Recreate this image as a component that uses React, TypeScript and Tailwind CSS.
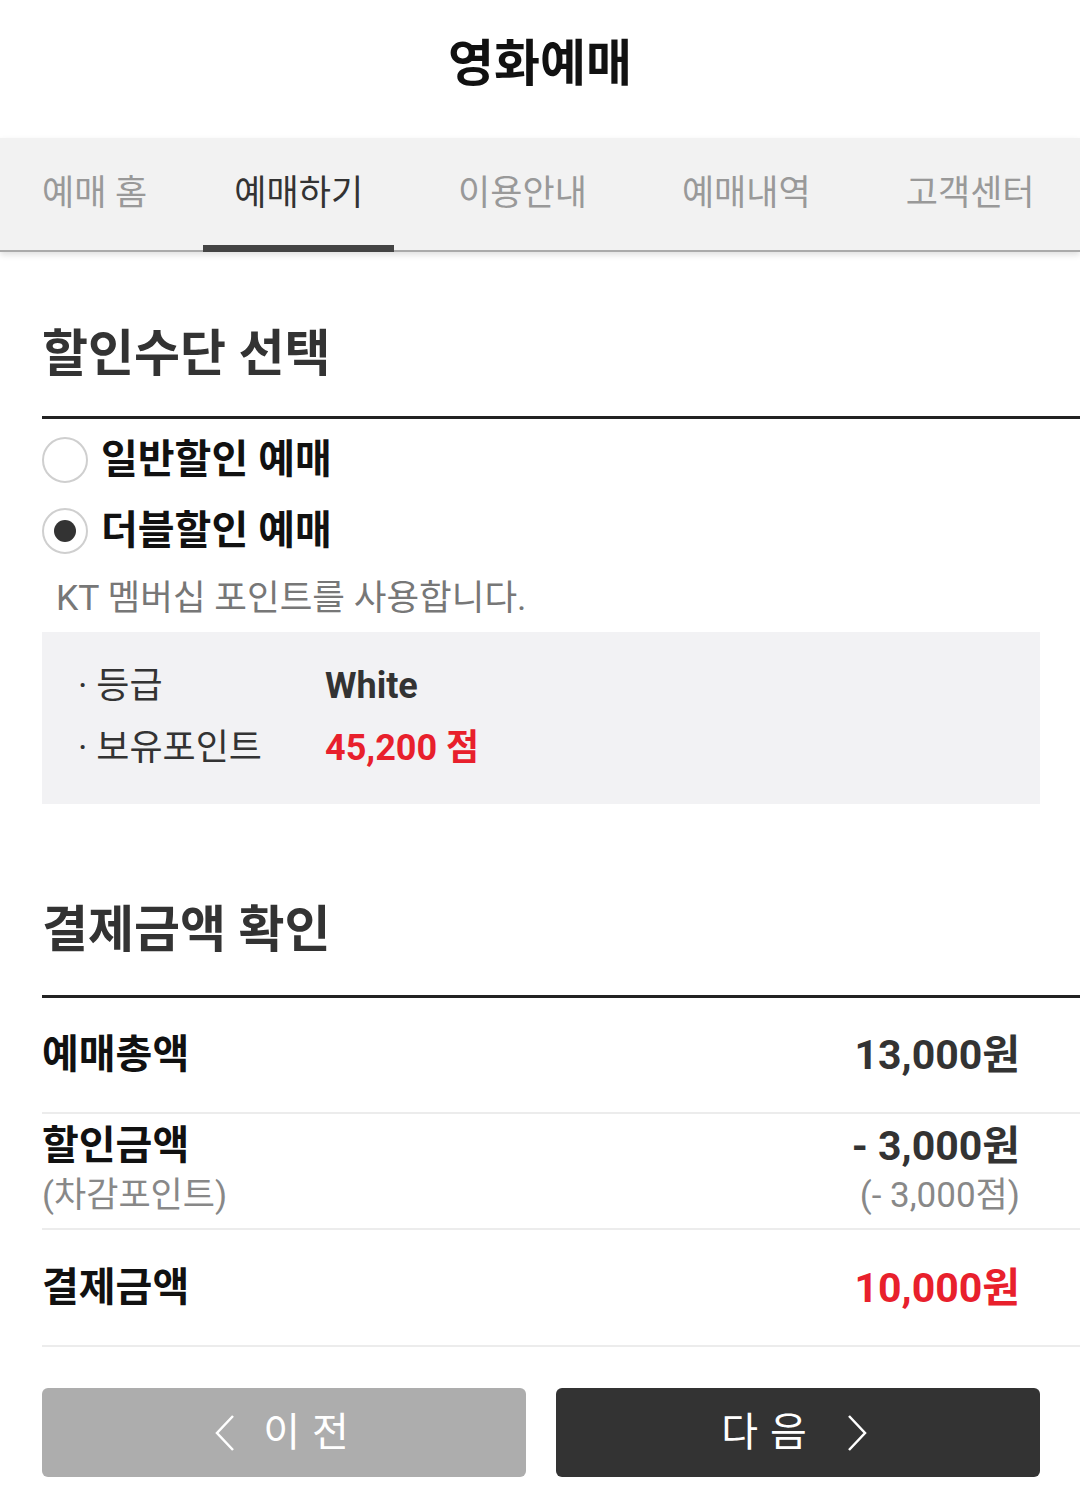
import { ReactNode } from 'react'

const FONT = { fontFamily: 'Roboto, "Noto Sans CJK KR", sans-serif' }

const TABS = [
  { label: '예매 홈', ml: 'ml-[11px]' },
  { label: '예매하기', ml: 'ml-[25px]', active: true },
  { label: '이용안내', ml: 'ml-[33px]' },
  { label: '예매내역', ml: 'ml-[33px]' },
  { label: '고객센터', ml: 'ml-[33px]' },
]

function Radio({ checked, children }: { checked?: boolean; children: ReactNode }) {
  return (
    <div className="flex h-[71px] items-center">
      <span className="flex h-[46px] w-[46px] items-center justify-center rounded-full border-2 border-[#cfcfcf] bg-white">
        {checked && <span className="h-[22px] w-[22px] rounded-full bg-[#333]" />}
      </span>
      <span className="ml-[13px] text-[40px] font-bold leading-none text-[#111]">{children}</span>
    </div>
  )
}

function SumRow({ label, sub, value, subValue, red, h }: {
  label: string
  sub?: string
  value: string
  subValue?: string
  red?: boolean
  h: string
}) {
  return (
    <div className={`flex ${h} items-center justify-between border-b-2 border-[#ececec] pr-[60px]`}>
      <div className="flex flex-col">
        <span className="text-[40px] font-bold leading-[50px] text-[#111]">{label}</span>
        {sub && <span className="text-[35px] leading-[50px] text-[#888]">{sub}</span>}
      </div>
      <div className="flex flex-col items-end">
        <span className={`text-[41px] font-bold leading-[50px] ${red ? 'text-[#e8202c]' : 'text-[#333]'}`}>{value}</span>
        {subValue && <span className="text-[35px] leading-[50px] text-[#888]">{subValue}</span>}
      </div>
    </div>
  )
}

export default function App() {
  return (
    <div className="min-h-[1499px] w-[1080px] bg-white" style={FONT}>
      <header className="flex h-[138px] items-center justify-center pb-[10px]">
        <h1 className="text-[50px] font-bold text-[#111]">영화예매</h1>
      </header>

      <nav className="relative flex h-[114px] border-b-2 border-[#aaa] bg-[#f2f2f2] shadow-[0_3px_6px_rgba(0,0,0,0.12)]">
        {TABS.map(t => (
          <div key={t.label} className={`relative flex items-center px-[31px] ${t.ml}`}>
            <span className={`text-[35px] ${t.active ? 'text-[#333]' : 'text-[#999]'}`}>{t.label}</span>
            {t.active && <span className="absolute bottom-[-2px] left-0 right-0 h-[7px] bg-[#444]" />}
          </div>
        ))}
      </nav>

      <main className="pl-[42px]">
        <h2 className="pt-[72px] pb-[32px] text-[50px] font-semibold leading-[60px] text-[#333]">할인수단 선택</h2>
        <div className="border-t-[3px] border-[#222] pt-[5px]">
          <Radio>일반할인 예매</Radio>
          <Radio checked>더블할인 예매</Radio>
          <p className="pl-[14px] pt-[12px] text-[35.5px] leading-[40px] text-[#777]">KT 멤버십 포인트를 사용합니다.</p>
        </div>

        <div className="mr-[40px] mt-[14px] bg-[#f2f2f4] pl-[36px] pt-[23px] pb-[25px]">
          <div className="flex h-[62px] items-center text-[36px]">
            <span className="w-[247px] text-[#333]">· 등급</span>
            <span className="font-bold text-[#333]">White</span>
          </div>
          <div className="flex h-[62px] items-center text-[36px]">
            <span className="w-[247px] text-[#333]">· 보유포인트</span>
            <span className="font-bold text-[#e8202c]">45,200 점</span>
          </div>
        </div>

        <h2 className="mt-[96px] pb-[35px] text-[50px] font-semibold leading-[60px] text-[#333]">결제금액 확인</h2>
        <div className="border-t-[3px] border-[#222]">
          <SumRow h="h-[116px]" label="예매총액" value="13,000원" />
          <SumRow h="h-[116px]" label="할인금액" sub="(차감포인트)" value="- 3,000원" subValue="(- 3,000점)" />
          <SumRow h="h-[117px]" label="결제금액" value="10,000원" red />
        </div>

        <div className="mt-[41px] flex gap-[30px] pr-[40px]">
          <button className="flex h-[89px] flex-1 items-center justify-center gap-[28px] rounded-[6px] bg-[#adadad] pl-[8px] text-white">
            <svg width="20" height="38" viewBox="0 0 20 38" fill="none" stroke="currentColor" strokeWidth="2.5">
              <polyline points="18,2 2,19 18,36" />
            </svg>
            <span className="text-[40px] leading-none tracking-[12px]">이전</span>
          </button>
          <button className="flex h-[89px] flex-1 items-center justify-center gap-[28px] rounded-[6px] bg-[#333] pr-[8px] text-white">
            <span className="text-[40px] leading-none tracking-[12px]">다음</span>
            <svg width="20" height="38" viewBox="0 0 20 38" fill="none" stroke="currentColor" strokeWidth="2.5">
              <polyline points="2,2 18,19 2,36" />
            </svg>
          </button>
        </div>
      </main>
    </div>
  )
}
